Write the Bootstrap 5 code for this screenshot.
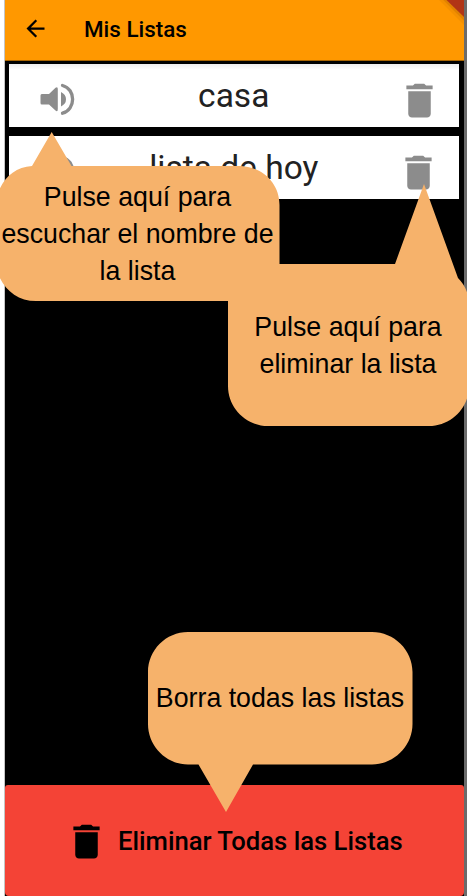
<!DOCTYPE html>
<html lang="es">
<head>
<meta charset="utf-8">
<meta name="viewport" content="width=device-width, initial-scale=1">
<title>Mis Listas</title>
<link href="https://cdn.jsdelivr.net/npm/bootstrap@5.3.0/dist/css/bootstrap.min.css" rel="stylesheet">
<style>
body{background:#fff;font-family:Roboto,"Liberation Sans",sans-serif;color:#000}
.screen{height:896px;padding-left:5px;background:linear-gradient(90deg,#fff 4px,#c4c4c4 4px,#c4c4c4 5px,#000 5px,#000 464px,#6b6b6b 464px)}
.phone{width:459px}
.topbar{height:61px;background:#ff9800;border-bottom:1px solid #a86400;padding:0 0 3px 17px}
.topbar h1{font-size:22.4px;font-weight:500;margin-left:35px;padding-top:2px}
.ribbon{right:0;top:0}
.lists{padding:3px 5px 0 4px;gap:9px}
.list-row{height:63px;background:#fff;color:#222;padding:0 17.500px 0 31px}
.list-row.first{background:linear-gradient(#eee,#fff 6px)}
.list-name{font-size:33.5px;line-height:42px;padding:1px 5px 0 0}
.list-row svg{fill:#8c8c8c;display:block;margin-top:9px}
.wipe{height:111px;background:#f44336;border-radius:3px 3px 4px 4px;padding:0 0 0 59px}
.wipe svg{margin-top:1px}
.wipe span{font-size:25.65px;font-weight:500;margin-left:9px;padding-top:2px}
.callout{font:26.75px/37px "Liberation Sans",Arial,sans-serif;color:#000}
.callout svg{left:0;top:0;fill:#f6b26b}
.callout p{white-space:nowrap}
.listen{left:-9px;top:132px;width:289px;height:170px;padding:47px 0 0 4px}
.remove{left:228px;top:184px;width:240px;height:243px;padding-top:125px}
.clear{left:147px;top:631px;width:266px;height:181px;padding-top:49px}
</style>
<script src="https://cdn.jsdelivr.net/npm/bootstrap@5.3.0/dist/js/bootstrap.bundle.min.js"></script>
</head>
<body>
<svg class="d-none">
  <symbol id="trash" viewBox="0 0 24 24"><path d="M6 19c0 1.100.9 2 2 2h8c1.100 0 2-.9 2-2V7H6zM19 4h-3.500l-1-1h-5l-1 1H5v2h14z"/></symbol>
  <symbol id="speaker" viewBox="0 0 36 34"><path d="M1.800 11H9L15.500 4.800Q17.800 3.200 17.800 6V26Q17.800 29.500 15.500 27.500L9 21.500H1.800Q.5 21.500 .5 20V12.500Q.5 11 1.800 11ZM21 9Q26 11.500 26 16.300T21 23.500Z"/><path d="M22.500 2.500C36 6 36 26.500 22.500 30.200" fill="none" stroke="#8c8c8c" stroke-width="3.300" stroke-linecap="round"/></symbol>
</svg>
<main class="screen position-relative overflow-hidden">
  <div class="phone h-100 d-flex flex-column">
    <header class="topbar position-relative d-flex align-items-center">
      <svg width="27" height="27" viewBox="0 0 24 24"><path d="M20 11H7.830l5.590-5.590L12 4l-8 8 8 8 1.410-1.410L7.830 13H20z"/></svg>
      <h1 class="mb-0">Mis Listas</h1>
      <svg class="ribbon position-absolute" width="30" height="26" viewBox="0 0 30 26"><path d="M6-4 36 26" stroke="#a85a00" stroke-width="7" opacity=".12"/><path d="M8-4 36 24" stroke="#a85a00" stroke-width="4" opacity=".25"/><path d="M12.500 0H30V17Z" fill="#b13516"/></svg>
    </header>
    <section class="lists d-flex flex-column flex-grow-1">
      <div class="list-row first d-flex align-items-center justify-content-between">
        <svg width="36" height="34"><use href="#speaker"/></svg>
        <span class="list-name">casa</span>
        <svg width="45" height="45"><use href="#trash"/></svg>
      </div>
      <div class="list-row d-flex align-items-center justify-content-between">
        <svg width="36" height="34"><use href="#speaker"/></svg>
        <span class="list-name">lista de hoy</span>
        <svg width="45" height="45"><use href="#trash"/></svg>
      </div>
    </section>
    <footer class="wipe d-flex align-items-center">
      <svg width="45" height="45"><use href="#trash"/></svg>
      <span>Eliminar Todas las Listas</span>
    </footer>
  </div>
  <div class="callout listen position-absolute text-center">
    <svg class="position-absolute" width="289" height="170"><path d="M41 34 60.700 0 80.500 34H248C271 34 288.500 51 288.500 73V169H45C20 169 4 148 4 124V79C4 56 18 35 41 34Z"/></svg>
    <p class="position-relative mb-0">Pulse aquí para<br>escuchar el nombre de<br>la lista</p>
  </div>
  <div class="callout remove position-absolute text-center">
    <svg class="position-absolute" width="240" height="243"><path d="M0 80H167L196 0 230 94C236 100 241 109 241 120V202C241 224 223 242 201 242H40C18 242 0 224 0 202Z"/></svg>
    <p class="position-relative mb-0">Pulse aquí para<br>eliminar la lista</p>
  </div>
  <div class="callout clear position-absolute text-center">
    <svg class="position-absolute" width="266" height="181"><path d="M41 1H225C247 1 265.500 19 265.500 41V93C265.500 115 247 133.500 225 133.500H106L79 181 51.500 133.500H41C19 133.500 1 115 1 93V41C1 19 19 1 41 1Z"/></svg>
    <p class="position-relative mb-0">Borra todas las listas</p>
  </div>
</main>
</body>
</html>
